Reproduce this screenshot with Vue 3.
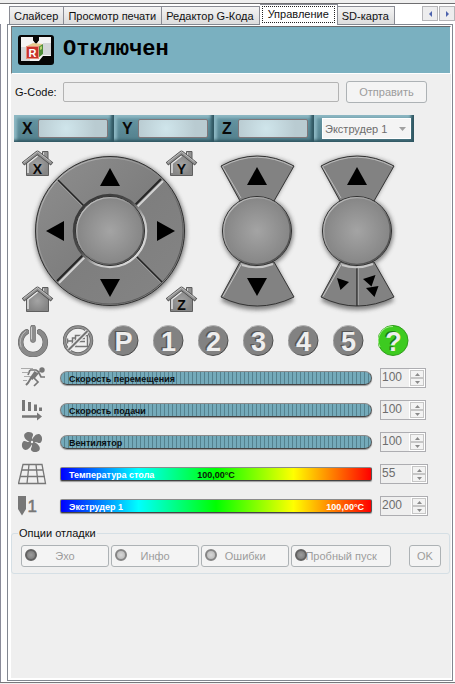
<script setup>
import { ref } from 'vue'

const tabs = ['Слайсер', 'Просмотр печати', 'Редактор G-Кода', 'Управление', 'SD-карта']
const active = ref(3)
const axes = ['X', 'Y', 'Z']
const scripts = ['1', '2', '3', '4', '5']

const rows = [
  { id: 'move', label: 'Скорость перемещения', value: 100, kind: 'ribbed' },
  { id: 'feed', label: 'Скорость подачи', value: 100, kind: 'ribbed' },
  { id: 'fan', label: 'Вентилятор', value: 100, kind: 'ribbed' },
  { id: 'bed', label: 'Температура стола', value: 55, kind: 'heat', reading: '100,00°C', place: 'middle' },
  { id: 'nozzle', label: 'Экструдер 1', value: 200, kind: 'heat', reading: '100,00°C', place: 'end' }
]

const debug = [
  { label: 'Эхо', on: true },
  { label: 'Инфо', on: false },
  { label: 'Ошибки', on: false },
  { label: 'Пробный пуск', on: true, wide: true }
]

const homes = [
  { name: 'Домой X', letter: 'X', area: 'hx' },
  { name: 'Домой Y', letter: 'Y', area: 'hy' },
  { name: 'Домой', letter: '', area: 'ha' },
  { name: 'Домой Z', letter: 'Z', area: 'hz' }
]
</script>

<template>
  <div class="window">
    <svg class="defs" width="0" height="0" aria-hidden="true">
      <defs>
        <radialGradient id="knob">
          <stop offset="0" stop-color="#a4a4a4" />
          <stop offset="1" stop-color="#858585" />
        </radialGradient>
        <linearGradient id="metal" x1="0" y1="0" x2="1" y2="1">
          <stop offset="0" stop-color="#8f8f8f" />
          <stop offset="0.5" stop-color="#7e7e7e" />
          <stop offset="1" stop-color="#858585" />
        </linearGradient>
        <linearGradient id="raised" x1="0" y1="0" x2="1" y2="1">
          <stop offset="0" stop-color="#e0e0e0" />
          <stop offset="0.4" stop-color="#9c9c9c" />
          <stop offset="0.65" stop-color="#5c5c5c" />
          <stop offset="1" stop-color="#2c2c2c" />
        </linearGradient>
        <linearGradient id="sunk" x1="0" y1="0" x2="1" y2="1">
          <stop offset="0" stop-color="#303030" />
          <stop offset="0.45" stop-color="#4c4c4c" />
          <stop offset="0.65" stop-color="#c8c8c8" />
          <stop offset="1" stop-color="#dedede" />
        </linearGradient>
        <filter id="soft" x="-20%" y="-20%" width="140%" height="140%">
          <feGaussianBlur stdDeviation="2" />
        </filter>
      </defs>
    </svg>

    <div class="frame">
      <nav class="tabs">
        <button
          v-for="(tab, i) in tabs"
          :key="tab"
          type="button"
          class="tab"
          :class="{ current: i === active }"
          @click="active = i"
        ><span>{{ tab }}</span></button>
        <div class="scrollers">
          <button type="button" aria-label="Предыдущая вкладка">
            <svg width="5" height="6"><path d="M4 0v6L1 3z" fill="#4d63ad" /></svg>
          </button>
          <button type="button" aria-label="Следующая вкладка">
            <svg width="5" height="6"><path d="M1 0v6l3-3z" fill="#4d63ad" /></svg>
          </button>
        </div>
      </nav>

      <div class="body">
        <main class="panel">
          <header class="status">
            <svg width="36" height="30" viewBox="0 0 36 30" aria-hidden="true">
              <rect width="36" height="30" rx="3" fill="#050505" />
              <path d="M3 2h12v3l3 4 3-4V2h12v19h-8l-4 5H3z" fill="#f4f4f4" />
              <path d="M3 12h9v14H3zM25 8h8v12h-8z" fill="#d3d6d8" />
              <path d="M15 2h6v3l-3 4-3-4z" fill="#050505" />
              <path d="M9 11l6-3 10 1-5 3z" fill="#e9c98f" />
              <path d="M20 12l5-3v10l-5 4z" fill="#4f8c3a" />
              <path d="M22 12l2-1v3l-2 1z" fill="#b7d36e" />
              <rect x="8.500" y="11.500" width="12" height="12" fill="#c8332b" stroke="#e88e7a" />
              <text x="14.500" y="21.500" text-anchor="middle" font-family="Liberation Sans, sans-serif" font-size="11" font-weight="700" fill="#fff">R</text>
            </svg>
            <h1>Отключен</h1>
          </header>

          <form class="gcode" @submit.prevent>
            <label for="gcode">G-Code:</label>
            <input id="gcode" type="text" disabled />
            <button type="submit" class="flat send" disabled>Отправить</button>
          </form>

          <div class="position">
            <label v-for="axis in axes" :key="axis" class="axis">
              <span>{{ axis }}</span>
              <input type="text" readonly />
            </label>
            <div class="axis tool">
              <select aria-label="Экструдер" disabled>
                <option>Экструдер 1</option>
              </select>
              <svg width="7" height="5" aria-hidden="true"><path d="M0 0h7L3.500 4z" fill="#a0a0a0" /></svg>
            </div>
          </div>

          <section class="moves">
            <div class="dial">
              <svg class="plate" viewBox="0 0 186 172" aria-hidden="true">
                <circle cx="96.500" cy="86" r="76" fill="#555" opacity="0.7" filter="url(#soft)" />
                <circle cx="96" cy="85" r="74.500" fill="url(#metal)" stroke="#303030" />
                <circle cx="96" cy="85" r="73" fill="none" stroke="url(#raised)" stroke-width="1" opacity="0.7" />
                <path d="M44 34l26 26M122 110l26 26" stroke="#222" stroke-width="1.500" />
                <path d="M43 35l26 26M121 111l26 26" stroke="#a5a5a5" stroke-width="0.700" />
                <path d="M147 33l-26 26M69 109l-26 26" stroke="#252525" stroke-width="2" />
                <path d="M149 35l-26 26M71 111l-26 26" stroke="#d2d2d2" stroke-width="2" />
                <circle cx="96" cy="85" r="36" fill="none" stroke="url(#sunk)" stroke-width="2.500" />
                <circle cx="96" cy="85" r="34.500" fill="url(#knob)" stroke="#303030" />
                <circle cx="96" cy="85" r="33.300" fill="none" stroke="url(#raised)" stroke-width="1.300" opacity="0.800" />
              </svg>
              <button v-for="home in homes" :key="home.area" type="button" class="bare home" :class="home.area" :aria-label="home.name">
                <svg width="32" height="26" viewBox="0 0 32 26">
                  <path d="M4.500 13v12.500h22V13L15.500 4z" fill="url(#knob)" stroke="#5f5f5f" />
                  <path d="M6 23V13.500L15.500 6" fill="none" stroke="#e8e8e8" stroke-width="1.500" />
                  <path d="M20.500 8V1.500h5.500V13" fill="#929292" stroke="#5c5c5c" />
                  <path d="M21.500 6V2.500" stroke="#ddd" />
                  <path d="M1 14L15.500 2.500 30 14" fill="none" stroke="#4d4d4d" stroke-width="4" stroke-linejoin="round" />
                  <path d="M1.500 13.500L15.500 2.500l14 11" fill="none" stroke="#929292" stroke-width="2.500" />
                  <path d="M1.500 12.500L15.500 1.700l13 10" fill="none" stroke="#c9c9c9" stroke-width="0.800" />
                  <text v-if="home.letter" x="15.500" y="23.500" text-anchor="middle" class="letter">{{ home.letter }}</text>
                </svg>
              </button>
              <button type="button" class="bare up" aria-label="Y вперёд"><svg width="20" height="18"><path d="M10 0l10 18H0z" /></svg></button>
              <button type="button" class="bare left" aria-label="X влево"><svg width="18" height="20"><path d="M0 10L18 0v20z" /></svg></button>
              <button type="button" class="bare right" aria-label="X вправо"><svg width="18" height="20"><path d="M18 10L0 0v20z" /></svg></button>
              <button type="button" class="bare down" aria-label="Y назад"><svg width="20" height="18"><path d="M10 18L20 0H0z" /></svg></button>
            </div>

            <div v-for="lift in ['Z', 'E']" :key="lift" class="lift">
              <svg class="plate" viewBox="0 0 100 172" aria-hidden="true">
                <path d="M14 19Q50 1 87 19L69 52H32zM14 155Q50 173 87 155L69 118H32z" fill="#555" opacity="0.700" filter="url(#soft)" />
                <circle cx="50.500" cy="86" r="36" fill="#555" opacity="0.700" filter="url(#soft)" />
                <path d="M14 20Q50 0 87 20L67 55H33z" fill="#828282" stroke="#343434" />
                <path d="M34 52L15.500 20.500Q50 2 85.500 20.500" fill="none" stroke="#bdbdbd" />
                <path d="M14 151Q50 169 87 151L67 116H33z" fill="#828282" stroke="#343434" />
                <path d="M16 150.500L35 117" fill="none" stroke="#c4c4c4" />
                <path v-if="lift === 'E'" d="M50 118v42" stroke="#303030" stroke-width="1.500" />
                <path v-if="lift === 'E'" d="M51.300 118v41" stroke="#a9a9a9" />
                <path d="M35 119Q50 124 66 118" fill="none" stroke="#c8c8c8" stroke-width="2" />
                <circle cx="50" cy="85" r="34.500" fill="url(#knob)" stroke="#303030" />
                <circle cx="50" cy="85" r="33.300" fill="none" stroke="url(#raised)" stroke-width="1.300" opacity="0.800" />
              </svg>
              <button type="button" class="bare wide" :aria-label="lift + ' вверх'"><svg width="20" height="18"><path d="M10 0l10 18H0z" /></svg></button>
              <button v-if="lift === 'Z'" type="button" class="bare wide low" aria-label="Z вниз"><svg width="20" height="18"><path d="M10 18L20 0H0z" /></svg></button>
              <template v-else>
                <button type="button" class="bare low" aria-label="Подать"><svg width="12" height="18"><path d="M0 0l12 4-8.500 8z" /></svg></button>
                <button type="button" class="bare low" aria-label="Подать быстро"><svg width="16" height="24"><path d="M0 4L12.500 0 8.500 11.500zM3 13l12.500-2-4 11z" /></svg></button>
              </template>
            </div>
          </section>

          <div class="actions">
            <button type="button" class="bare" aria-label="Питание">
              <svg width="32" height="32" viewBox="0 0 32 32" fill="none" stroke-linecap="round">
                <path d="M8.500 6.800A12.300 12.300 0 1 0 21.500 6.800" stroke="#606060" stroke-width="5.500" />
                <path d="M8.500 6.800A12.300 12.300 0 1 0 21.500 6.800" stroke="#8a8a8a" stroke-width="4.500" />
                <path d="M7.500 6.300A13.500 13.500 0 0 0 3 22" stroke="#c5c5c5" stroke-width="0.800" />
                <path d="M15 2.500V15" stroke="#efefef" stroke-width="8" />
                <path d="M15 2.500V15" stroke="#666" stroke-width="5.500" />
                <path d="M15 2.500V15" stroke="#8e8e8e" stroke-width="4.500" />
                <path d="M13.500 2.500V14" stroke="#ccc" />
              </svg>
            </button>
            <button type="button" class="bare" aria-label="Отключить моторы">
              <svg width="32" height="32" viewBox="0 0 32 32" fill="none">
                <circle cx="15" cy="15.500" r="13.500" stroke="#606060" stroke-width="3.500" />
                <circle cx="15" cy="15.500" r="13.500" stroke="#919191" stroke-width="2" />
                <path d="M4.500 13.500v5M4.500 16h5M9.500 13h3v6h-3zM12.500 10.500h12v11h-12zM15 13.500h7M15 16.500h7" stroke="#747474" stroke-width="1.500" />
                <path d="M24.500 6L5.500 25" stroke="#eee" stroke-width="4" />
                <path d="M24.500 6L5.500 25" stroke="#747474" stroke-width="2" />
              </svg>
            </button>
            <button v-for="name in ['P', ...scripts]" :key="name" type="button" class="bare" :aria-label="'Скрипт ' + name">
              <svg width="32" height="32" viewBox="0 0 32 32">
                <circle cx="15" cy="15.500" r="15" fill="#828282" stroke="url(#raised)" />
                <text x="14" y="24.500" text-anchor="middle" class="digit dark">{{ name }}</text>
                <text x="15.500" y="25.500" text-anchor="middle" class="digit">{{ name }}</text>
              </svg>
            </button>
            <button type="button" class="bare" aria-label="Помощь">
              <svg width="32" height="32" viewBox="0 0 32 32">
                <circle cx="15" cy="15.500" r="15" fill="#3dcb20" stroke="#2f9c1b" />
                <path d="M2 22A14 14 0 0 1 15 1.500" fill="none" stroke="#a4ee8c" />
                <text x="14" y="25" text-anchor="middle" class="digit help dark">?</text>
                <text x="15.500" y="26" text-anchor="middle" class="digit help">?</text>
              </svg>
            </button>
          </div>

          <div class="rows">
            <div v-for="row in rows" :key="row.id" class="row">
              <svg class="sign" width="30" height="24" viewBox="0 0 30 24" fill="none" stroke="#777" aria-hidden="true">
                <template v-if="row.id === 'move'">
                  <circle cx="24" cy="4" r="2.700" fill="#777" stroke="none" />
                  <path d="M12 4h6l3 2-5 6 4 4-4 4" stroke-width="1.700" />
                  <path d="M18 6l-5 7" stroke-width="3.500" />
                  <path d="M13 12l-3 5-2 2" stroke-width="2" />
                  <path d="M21 7l2 4h4" stroke-width="1.700" />
                  <path d="M12 4l-2 5" stroke-width="1.700" />
                  <path d="M3 2.500h12M4 6.500h7M6 10.500h7M5 14.500h4" stroke="#999" stroke-width="0.800" />
                </template>
                <template v-else-if="row.id === 'feed'">
                  <path d="M5.500 2v11M11.500 4v9M17.500 6.500V13M22.500 9.500V13" stroke-width="3" />
                  <path d="M4 18.500h17" stroke-width="2.500" />
                  <path d="M19 14.500l5 4-5 4z" fill="#777" stroke="none" />
                </template>
                <template v-else-if="row.id === 'fan'">
                  <g fill="#777" stroke="none">
                    <path v-for="turn in [0, 90, 180, 270]" :key="turn" :transform="`rotate(${turn} 14 12)`" d="M13 12.500C8 10.500 5 7 6.500 4 8.500 1 14 1.500 15 4 15.500 6.500 12.500 7.500 15 11.500z" />
                  </g>
                  <circle cx="14" cy="12" r="1.200" fill="#efefef" stroke="none" />
                </template>
                <template v-else-if="row.id === 'bed'">
                  <path d="M5 2.500h19L27.500 21.500h-27zM4 8h21.500M2.500 14.500h24.500M11 2.500L9 21.500M18 2.500L20 21.500" stroke-width="1.300" />
                </template>
                <template v-else>
                  <path d="M0 2h8v13l-4 6.500L0 15z" fill="#777" stroke="none" />
                  <text x="9.500" y="17.500" font-size="17" class="number">1</text>
                </template>
              </svg>
              <div class="bar" :class="row.kind">
                <input v-if="row.kind === 'ribbed'" type="range" :aria-label="row.label" :value="100" disabled />
                <span class="name">{{ row.label }}</span>
                <span v-if="row.reading" class="reading" :class="row.place">{{ row.reading }}</span>
              </div>
              <div class="slot">
                <div class="number-box" :class="row.kind">
                  <input type="text" inputmode="numeric" :aria-label="row.label" :value="row.value" disabled />
                  <div class="steps">
                    <button type="button" aria-label="Больше" disabled><svg width="5" height="3"><path d="M0 3h5L2.500 0z" /></svg></button>
                    <button type="button" aria-label="Меньше" disabled><svg width="5" height="3"><path d="M0 0h5L2.500 3z" /></svg></button>
                  </div>
                </div>
              </div>
            </div>
          </div>

          <fieldset class="debug">
            <legend>Опции отладки</legend>
            <div class="toggles">
              <button v-for="item in debug" :key="item.label" type="button" class="flat toggle" :class="{ long: item.wide }" disabled>
                <i class="lamp" :class="{ on: item.on }"></i>{{ item.label }}
              </button>
              <button type="button" class="flat ok" disabled>OK</button>
            </div>
          </fieldset>
        </main>
      </div>
    </div>
  </div>
</template>

<style>
body {
  margin: 0;
}
</style>

<style scoped>
* {
  box-sizing: border-box;
}
button,
input,
select {
  font: inherit;
  margin: 0;
  padding: 0;
}
svg {
  display: block;
  flex: none;
}
.defs {
  position: absolute;
}
.window {
  min-height: 100vh;
  display: flex;
  flex-direction: column;
  padding: 3px 0 1px;
  background: #efefef;
  font: 11px/14px "Liberation Sans", Arial, sans-serif;
  color: #111;
}
.frame {
  flex: 1;
  display: flex;
  flex-direction: column;
  background: #fff;
  border-top: 1px solid #6e6e70;
  border-bottom: 1px solid #77777b;
}
.tabs {
  display: flex;
  align-items: flex-end;
  height: 20px;
  padding-left: 9px;
}
.tab {
  height: 18px;
  padding: 0 5px 0 4px;
  border: 1px solid #8a8c94;
  border-bottom: 0;
  border-left-width: 0;
  background: linear-gradient(#f4f4f4, #dcdcdc);
  white-space: nowrap;
  color: #111;
}
.tab:first-child {
  border-left-width: 1px;
}
.tab.current {
  height: 21px;
  margin-bottom: -1px;
  padding: 1px 2px 2px;
  background: #fff;
  position: relative;
}
.tab.current span {
  display: block;
  border: 1px dotted #222;
  padding: 0 5px 1px;
}
.scrollers {
  display: flex;
  gap: 1px;
  margin-left: auto;
  margin-bottom: 3px;
}
.scrollers button {
  display: grid;
  place-items: center;
  width: 16px;
  height: 15px;
  border: 1px solid #b5b5b8;
  background: #ededee;
}
.body {
  flex: 1;
  display: flex;
  padding: 0 2px 1px 6px;
  border-left: 1px solid #8a8b99;
}
.panel {
  flex: 1;
  min-width: 0;
  border: 1px solid #828790;
  padding: 1px 1px 2px 3px;
  background: linear-gradient(#efefef, #efefef) content-box #fff;
}
.status {
  display: flex;
  align-items: center;
  gap: 9px;
  height: 48px;
  padding: 0 0 0 6px;
  background: #7ab0c0;
  border: 1px solid;
  border-color: #69696b #fff #fff #777;
}
h1 {
  margin: 0;
  font: 700 22px/26px "Liberation Mono", "Courier New", monospace;
  color: #000;
}
.gcode {
  display: flex;
  align-items: center;
  height: 35px;
  padding: 0 24px 0 4px;
}
.gcode label {
  width: 48px;
}
.gcode input {
  flex: 1;
  min-width: 0;
  height: 20px;
  border: 1px solid #b3b3b3;
  border-radius: 2px;
  background: #efefef;
}
.flat {
  border: 1px solid #adb2b5;
  border-radius: 3px;
  background: #f4f4f4;
  color: #9c9c9c;
  height: 22px;
  white-space: nowrap;
}
.send {
  width: 81px;
  margin-left: 7px;
}
.position {
  display: grid;
  grid-template-columns: repeat(4, minmax(0, 1fr));
  margin: 6px 37px 0 3px;
}
.axis {
  display: flex;
  align-items: center;
  min-width: 0;
  height: 27px;
  padding: 0 6px 0 8px;
  background: linear-gradient(#6797a4, #527f8c);
  box-shadow: inset -4px -3px 3px -1px #2f5661, inset 4px 4px 3px -1px #8db8c3;
}
.axis span {
  width: 16px;
  font: 700 16px/18px "Liberation Sans", Arial, sans-serif;
  color: #080808;
}
.axis input {
  flex: 1;
  min-width: 0;
  height: 19px;
  border: 1px solid #80777a;
  border-radius: 2px;
  background: radial-gradient(circle at 40% 50%, #cfe5eb, #b9cbd1 70%);
}
.tool {
  position: relative;
  padding: 0 3px 0 8px;
}
.tool select {
  flex: 1;
  min-width: 0;
  height: 21px;
  padding-left: 2px;
  appearance: none;
  border: 1px solid #fff;
  border-radius: 0;
  background: #f4f4f4;
  color: #6d6d6d;
  opacity: 1;
}
.tool svg {
  position: absolute;
  right: 8px;
  top: 12px;
}
.moves {
  display: grid;
  grid-template-columns: 193px 100px 100px;
  margin: 4px 0 0 3px;
}
.dial,
.lift {
  position: relative;
  height: 172px;
}
.dial {
  display: grid;
  grid-template: 53px 60px 49px / 65px 1fr 65px;
  margin-right: 7px;
  padding: 4px 2px 6px 8px;
}
.plate {
  position: absolute;
  inset: 0;
  width: 100%;
  height: 100%;
}
.bare {
  position: relative;
  display: grid;
  place-items: center;
  border: 0;
  background: none;
  color: #060606;
}
.home {
  place-items: start;
  align-self: start;
  justify-self: start;
}
.hx { grid-area: 1 / 1; }
.hy { grid-area: 1 / 3; justify-self: end; }
.ha { grid-area: 3 / 1; align-self: end; }
.hz { grid-area: 3 / 3; align-self: end; justify-self: end; }
.up { grid-area: 1 / 2; }
.left { grid-area: 2 / 1; padding-bottom: 4px; }
.right { grid-area: 2 / 3; padding-bottom: 4px; }
.down { grid-area: 3 / 2; }
.letter {
  font: 700 14px "Liberation Sans", Arial, sans-serif;
  fill: #080808;
}
.lift {
  display: grid;
  grid-template: 59px 52px 59px / 28px 28px;
  justify-content: center;
}
.wide {
  grid-column: 1 / 3;
}
.low {
  grid-row: 3;
}
.actions {
  display: grid;
  grid-template-columns: repeat(9, 1fr);
  margin: 7px 35px 0 0;
}
.digit {
  font: 700 27px "Liberation Sans", Arial, sans-serif;
  fill: #eee;
}
.digit.dark {
  fill: #555;
}
.digit.help.dark {
  fill: #1d7a10;
}
.rows {
  margin-top: 5px;
  padding: 0 23px 0 7px;
}
.row {
  display: flex;
  align-items: center;
  height: 32px;
}
.bar {
  flex: 1;
  min-width: 0;
  position: relative;
  display: flex;
  align-items: center;
  height: 14px;
  margin-left: 12px;
  padding: 1px 7px 0 8px;
  border: 1px solid;
  border-color: #8a8a8a #555 #444 #777;
  border-radius: 2px;
  font: 700 9px/12px "Liberation Sans", Arial, sans-serif;
  box-shadow: 0 1px 1px #999;
}
.bar.ribbed {
  color: #0a0f12;
  border-radius: 7px;
  background: repeating-linear-gradient(90deg, #74aaba 0 3px, #54818e 3px 4px);
}
.bar input {
  position: absolute;
  inset: 0;
  width: 100%;
  height: 100%;
  opacity: 0;
}
.bar.heat {
  color: #fff;
  background: linear-gradient(90deg, #00f, #0ff 25%, #0f0 50%, #ff0 75%, #f00);
}
.reading {
  margin-left: auto;
}
.middle {
  position: absolute;
  left: 50%;
  transform: translateX(-50%);
  color: #0a1a0a;
}
.slot {
  width: 48px;
  margin-left: 8px;
}
.number-box {
  display: flex;
  width: 46px;
  height: 20px;
  border: 1px solid #adadb1;
  background: #efefef;
  font-size: 12px;
}
.number-box.heat {
  width: 48px;
}
.number-box input {
  flex: 1;
  min-width: 0;
  height: 16px;
  padding-left: 1px;
  border: 0;
  background: none;
  color: #6d6d6d;
}
.steps {
  display: grid;
  grid-template-rows: 1fr 1fr;
  width: 16px;
  border: 1px solid #fff;
}
.steps button {
  display: grid;
  place-items: center;
  border: 1px solid #c6c6c6;
  background: #f3f3f3;
}
.steps path {
  fill: #8b8b8b;
}
.number {
  font-family: "Liberation Sans", Arial, sans-serif;
  fill: #777;
  stroke: #777;
  stroke-width: 0.5px;
}
.debug {
  margin: 4px 1px 0 0;
  padding: 5px 8px 6px 9px;
  border: 1px solid #d5dfe5;
  border-radius: 3px;
}
.debug legend {
  margin-left: -3px;
  padding: 0 1px;
}
.toggles {
  display: flex;
  gap: 2px;
}
.toggle {
  position: relative;
  flex: 88 1 0;
}
.toggle.long {
  flex-grow: 100;
}
.ok {
  width: 32px;
  margin-left: 16px;
}
.lamp {
  position: absolute;
  left: 3px;
  top: 3px;
  width: 12px;
  height: 12px;
  border: 2px solid #858585;
  border-radius: 50%;
  background: radial-gradient(#d8d8d8, #b5b5b5);
}
.lamp.on {
  border-color: #626262;
  background: radial-gradient(#9d9d9d, #777);
}
</style>
